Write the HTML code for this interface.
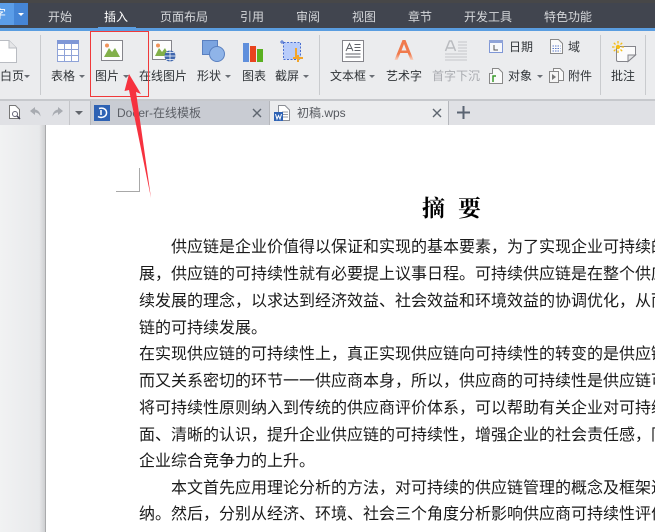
<!DOCTYPE html>
<html><head><meta charset="utf-8">
<style>
html,body{margin:0;padding:0;width:655px;height:532px;overflow:hidden;background:#fff}
#r{position:relative;width:655px;height:532px;overflow:hidden;font-family:"Liberation Sans","Noto Sans CJK SC",sans-serif}
.a{position:absolute}
.t{position:absolute;top:8px;font-size:12px;line-height:18px;color:#d5d7da;white-space:nowrap}
.l{position:absolute;font-size:12px;line-height:16px;color:#303438;white-space:nowrap}
.b{position:absolute;left:139px;font-size:16px;line-height:20px;color:#1a1a1a;white-space:nowrap;font-family:"Liberation Serif","WenQuanYi Zen Hei",sans-serif}
.s{position:absolute;top:35px;width:1px;height:60px;background:#c9cbce}
.c{position:absolute;width:0;height:0;border-left:3px solid transparent;border-right:3px solid transparent;border-top:3px solid #6a6e75}
svg{position:absolute;overflow:visible}
</style></head><body><div id="r">
<div class="a" style="left:0;top:0;width:655px;height:28px;background:#41454f"></div>
<div class="a" style="left:0;top:0;width:655px;height:3px;background:#474748"></div>
<div class="a" style="left:0;top:3px;width:28px;height:22px;background:#4585d6"></div>
<div class="a" style="left:0;top:3px;width:14px;height:22px;background:#5b9de8;overflow:hidden"><div class="a" style="left:-6px;top:3px;font-size:12px;line-height:16px;color:#fff">字</div></div>
<div class="a" style="left:18px;top:13px;border-left:3.500px solid transparent;border-right:3.500px solid transparent;border-top:3.500px solid #fff"></div>
<div class="a" style="left:0;top:28px;width:655px;height:3px;background:#5a9de0"></div>
<div class="a" style="left:98px;top:27px;width:38px;height:1px;background:#5a9de0"></div>
<div class="t" style="left:48px">开始</div>
<div class="t" style="left:104px;color:#fff">插入</div>
<div class="t" style="left:160px">页面布局</div>
<div class="t" style="left:240px">引用</div>
<div class="t" style="left:296px">审阅</div>
<div class="t" style="left:352px">视图</div>
<div class="t" style="left:408px">章节</div>
<div class="t" style="left:464px">开发工具</div>
<div class="t" style="left:544px">特色功能</div>

<div class="a" style="left:0;top:31px;width:655px;height:68px;background:#ebecee"></div>
<div class="a" style="left:0;top:99px;width:655px;height:2px;background:#c6c8cc"></div>
<div class="s" style="left:40px"></div><div class="s" style="left:319px"></div><div class="s" style="left:600px"></div><div class="s" style="left:645px"></div>

<svg style="left:0;top:40px" width="17" height="24"><path d="M-3 .5H9L16.500 8V22.500H-3Z" fill="#fff" stroke="#b9bcc2"/><path d="M9 .5V8H16.500" fill="#e5e6e8" stroke="#b9bcc2"/></svg>
<div class="l" style="left:0;top:68px">白页</div><div class="c" style="left:24px;top:75px"></div>
<svg style="left:57px;top:40px" width="22" height="22"><rect x=".5" y=".5" width="21" height="21" fill="#fff" stroke="#8fa3d8"/><rect x="0" y="0" width="22" height="4" fill="#7f97d6"/><path d="M7.500 4V22M14.500 4V22M0 9.500H22M0 15.500H22" stroke="#8fa3d8"/></svg>
<div class="l" style="left:51px;top:68px">表格</div><div class="c" style="left:79px;top:75px"></div>
<svg style="left:101px;top:40px" width="22" height="21"><rect x=".5" y=".5" width="21" height="20" fill="#fdfdfd" stroke="#85858b"/><circle cx="6" cy="5.500" r="2" fill="#f0935a"/><path d="M3 17L8 8L11 12L14 8L19 17Z" fill="#82b04a"/></svg>
<div class="l" style="left:95px;top:68px">图片</div><div class="c" style="left:123px;top:75px"></div>
<svg style="left:152px;top:40px" width="24" height="22"><rect x=".5" y=".5" width="19" height="19" fill="#fdfdfd" stroke="#85858b"/><circle cx="6" cy="5.500" r="2" fill="#f0935a"/><path d="M3 16L7 8L10 12L13 8L17 16Z" fill="#82b04a"/><circle cx="18" cy="16" r="5.500" fill="#3f66ad"/><path d="M12.500 16H23.500M18 10.500V21.500M14 12.500H22M14 19.500H22" stroke="#fff" stroke-width=".7"/></svg>
<div class="l" style="left:139px;top:68px">在线图片</div>
<svg style="left:202px;top:40px" width="24" height="22"><rect x=".5" y=".5" width="15" height="14" fill="#7ba4e0" stroke="#5a80c0"/><circle cx="15" cy="14" r="7.500" fill="#8fb4e8" stroke="#5a80c0"/></svg>
<div class="l" style="left:197px;top:68px">形状</div><div class="c" style="left:225px;top:75px"></div>
<svg style="left:243px;top:43px" width="22" height="20"><rect x="0" y="0" width="6" height="19" fill="#5f8fdc"/><rect x="7" y="3" width="6" height="16" fill="#e8431e"/><rect x="14" y="6" width="6" height="13" fill="#5ab020"/></svg>
<div class="l" style="left:242px;top:68px">图表</div>
<svg style="left:281px;top:40px" width="24" height="24"><rect x="2.500" y="2.500" width="17" height="17" fill="#b8ccfa" stroke="#4a6fd0" stroke-dasharray="2 1.500"/><path d="M1 0V4M-1 2H3" stroke="#4a6fd0"/><path d="M15 8V18H22M17 15V22M12 18H18" stroke="#f2a52c" stroke-width="2" fill="none"/></svg>
<div class="l" style="left:275px;top:68px">截屏</div><div class="c" style="left:303px;top:75px"></div>
<svg style="left:342px;top:40px" width="22" height="22"><rect x=".5" y=".5" width="21" height="21" fill="#fff" stroke="#85858b"/><path d="M4 11L7.500 3.500L11 11M5.500 8.500H9.500M12.500 4.500H18.500M12.500 7.500H18.500M12.500 10.500H18.500M3.500 14H18.500M3.500 17H18.500" stroke="#5f6268" fill="none"/></svg>
<div class="l" style="left:330px;top:68px">文本框</div><div class="c" style="left:369px;top:75px"></div>
<svg style="left:393px;top:39px" width="22" height="24"><defs><linearGradient id="g" x1="0" y1="0" x2="0" y2="1"><stop offset=".7" stop-color="#f07a4c"/><stop offset="1" stop-color="#f9d5c5"/></linearGradient></defs><path d="M1.500 21L9.500 1H12.500L20.500 21L17.500 21L14.700 14H7.300L4.500 21Z" fill="url(#g)"/><path d="M8.500 11.500H13.500L11 5Z" fill="#ebecee"/></svg>
<div class="l" style="left:386px;top:68px">艺术字</div>
<svg style="left:445px;top:40px" width="22" height="22"><path d="M0.500 11L4.500 1H6.500L10.500 11M2.500 8H8.500" stroke="#b9bbbf" stroke-width="1.500" fill="none"/><path d="M13 2H22M13 5H22M13 8H22M13 11H22M0 14H22M0 17H22M0 20H22" stroke="#c4c6ca"/></svg>
<div class="l" style="left:432px;top:68px;color:#a9abb0">首字下沉</div>
<svg style="left:489px;top:39px" width="14" height="14"><rect x=".5" y="1.500" width="13" height="12" fill="#f7f8fc" stroke="#7f97d6"/><path d="M0 1H14V4H0Z" fill="#8fa3d8"/><path d="M5 6V11H9" stroke="#555" fill="none"/></svg>
<div class="l" style="left:509px;top:39px">日期</div>
<svg style="left:550px;top:39px" width="13" height="15"><path d="M.5 .5H8.500L12.500 4.500V14.500H.5Z" fill="#fafafa" stroke="#888"/><path d="M2.500 7H10.500M2.500 9.500H10.500M2.500 12H10.500" stroke="#5c7ac8" stroke-dasharray="1.500 1"/></svg>
<div class="l" style="left:568px;top:39px">域</div>
<svg style="left:489px;top:68px" width="14" height="16"><path d="M.5 5.500H3.500V.5H9.500L13.500 4.500V15.500H.5Z" fill="#fafafa" stroke="#888"/><path d="M4 14V8H7" stroke="#3a9a2a" stroke-width="1.500" fill="none"/></svg>
<div class="l" style="left:508px;top:68px">对象</div><div class="c" style="left:537px;top:75px"></div>
<svg style="left:549px;top:68px" width="15" height="16"><rect x=".5" y="3.500" width="9" height="11" fill="#f5f5f5" stroke="#888"/><path d="M4.500 .5H11L14.500 4V12.500H9.500V3.500H4.500Z" fill="#fafafa" stroke="#888"/><path d="M3 6V12L7 9Z" fill="#777"/></svg>
<div class="l" style="left:568px;top:68px">附件</div>
<svg style="left:612px;top:41px" width="24" height="22"><path d="M4.500 5.500H23.500V14L16 20.500H6C5 20.500 4.500 20 4.500 19Z" fill="#fbfbfb" stroke="#85858b"/><path d="M16 20.500V14H23.500Z" fill="#e4e5e7" stroke="#85858b"/><circle cx="6" cy="6" r="2.200" fill="#f4bd18"/><path d="M6 0V2.500M6 9.500V12M0 6H2.500M9.500 6H12M1.800 1.800L3.500 3.500M8.500 8.500L10.200 10.200M1.800 10.200L3.500 8.500M8.500 3.500L10.200 1.800" stroke="#f4bd18" stroke-width="1.300"/></svg>
<div class="l" style="left:611px;top:68px">批注</div>

<div class="a" style="left:0;top:101px;width:655px;height:24px;background:#e0e1e5"></div>
<div class="a" style="left:90px;top:101px;width:179px;height:24px;background:#c9ccd3;border-left:1px solid #b5b7bc;box-sizing:border-box"></div>
<div class="a" style="left:269px;top:101px;width:180px;height:24px;background:#ebecee;border-left:1px solid #b5b7bc;border-right:1px solid #b5b7bc;box-sizing:border-box"></div>
<div class="a" style="left:69px;top:101px;width:1px;height:24px;background:#c4c5c9"></div>
<svg style="left:9px;top:105px" width="12" height="15"><path d="M.5 .5H6.500L10.500 4.500V13.500H.5Z" fill="#fff" stroke="#777"/><circle cx="6" cy="9" r="2.500" fill="none" stroke="#667"/><path d="M8 11L11 14" stroke="#445" stroke-width="1.500"/></svg>
<svg style="left:30px;top:107px" width="11" height="10"><path d="M5 0L0 4L5 8V5.500C7 5.500 9 6.500 10.500 9.500C10.500 5.500 8 3 5 2.500Z" fill="#a8abb1"/></svg>
<svg style="left:52px;top:107px" width="11" height="10"><path d="M6 0L11 4L6 8V5.500C4 5.500 2 6.500 .5 9.500C.5 5.500 3 3 6 2.500Z" fill="#a8abb1"/></svg>
<div class="a" style="left:75px;top:111px;border-left:4px solid transparent;border-right:4px solid transparent;border-top:4px solid #62666c"></div>
<div class="a" style="left:94px;top:105px;width:16px;height:16px;background:#2e62b4"></div>
<svg style="left:94px;top:105px" width="16" height="16"><path d="M5 3.500C10 2 13 5 12.500 8.500C12 12 7 13.500 4 11.500M7 5V10" stroke="#fff" stroke-width="1.500" fill="none"/></svg>
<div class="a" style="left:117px;top:105px;font-size:12px;line-height:17px;color:#5c5f66;white-space:nowrap">Docer-在线模板</div>
<svg style="left:252px;top:108px" width="10" height="10"><path d="M1 1L9 9M9 1L1 9" stroke="#5f6670" stroke-width="1.400"/></svg>
<svg style="left:274px;top:105px" width="16" height="16"><path d="M4.500 .5H11L15.500 5V15.500H4.500Z" fill="#fff" stroke="#8a8d94"/><path d="M8 7H14M8 9.500H14M8 12H14" stroke="#9a9da3"/><rect x="0" y="7" width="9" height="9" fill="#2e62b4"/><path d="M1.500 9L3 14L4.500 10.500L6 14L7.500 9" stroke="#fff" fill="none"/></svg>
<div class="a" style="left:297px;top:105px;font-size:12px;line-height:17px;color:#55585e;white-space:nowrap">初稿.wps</div>
<svg style="left:432px;top:108px" width="10" height="10"><path d="M1 1L9 9M9 1L1 9" stroke="#5f6670" stroke-width="1.400"/></svg>
<svg style="left:457px;top:106px" width="13" height="13"><path d="M6.500 0V13M0 6.500H13" stroke="#5a6472" stroke-width="2"/></svg>

<div class="a" style="left:0;top:125px;width:46px;height:407px;background:linear-gradient(90deg,#f1f2f3,#e8e9eb 85%,#c9cacc)"></div>
<div class="a" style="left:45px;top:125px;width:1px;height:407px;background:#a9aaac"></div>
<div class="a" style="left:116px;top:191px;width:24px;height:1px;background:#a8a8a8"></div>
<div class="a" style="left:139px;top:168px;width:1px;height:24px;background:#a8a8a8"></div>

<div class="a" style="left:422px;top:192px;font-size:23px;line-height:30px;color:#000;white-space:nowrap;font-weight:bold;font-family:'Noto Serif CJK SC',serif;letter-spacing:13px">摘要</div>

<div class="b" style="left:171px;top:238px">供应链是企业价值得以保证和实现的基本要素，为了实现企业可持续的</div>
<div class="b" style="top:265px">展，供应链的可持续性就有必要提上议事日程。可持续供应链是在整个供应</div>
<div class="b" style="top:292px">续发展的理念，以求达到经济效益、社会效益和环境效益的协调优化，从而</div>
<div class="b" style="top:319px">链的可持续发展。</div>
<div class="b" style="top:345px">在实现供应链的可持续性上，真正实现供应链向可持续性的转变的是供应链</div>
<div class="b" style="top:372px">而又关系密切的环节一一供应商本身，所以，供应商的可持续性是供应链可</div>
<div class="b" style="top:399px">将可持续性原则纳入到传统的供应商评价体系，可以帮助有关企业对可持续</div>
<div class="b" style="top:426px">面、清晰的认识，提升企业供应链的可持续性，增强企业的社会责任感，同</div>
<div class="b" style="top:452px">企业综合竞争力的上升。</div>
<div class="b" style="left:171px;top:479px">本文首先应用理论分析的方法，对可持续的供应链管理的概念及框架进</div>
<div class="b" style="top:505px">纳。然后，分别从经济、环境、社会三个角度分析影响供应商可持续性评价</div>

<div class="a" style="left:90px;top:31px;width:59px;height:66px;border:1px solid #f0393a;box-sizing:border-box"></div>
<svg style="left:0;top:0" width="655" height="532"><path d="M129 74L141 94L136 92L151 198L129 90L124.500 91Z" fill="#f6323f"/></svg>
</div></body></html>
